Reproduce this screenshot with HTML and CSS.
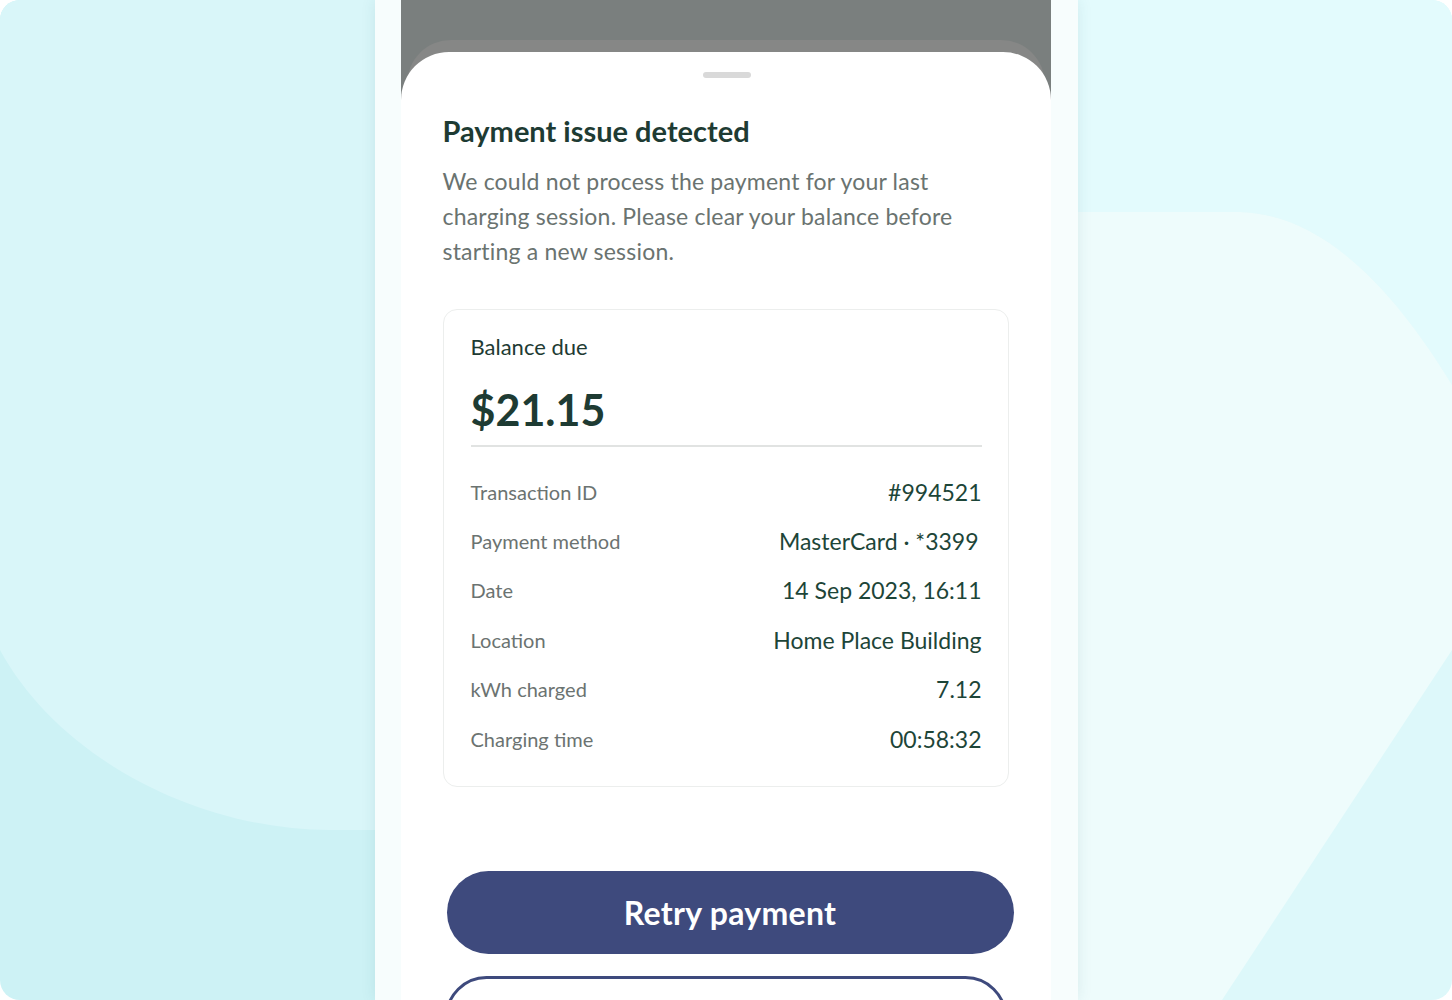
FILE: index.html
```html
<!DOCTYPE html>
<html lang="en">
<head>
<meta charset="utf-8">
<title>Payment issue detected</title>
<link rel="stylesheet" href="styles.css">
</head>
<body>
<div class="stage">
  <svg class="backdrop" viewBox="0 0 1452 1000" preserveAspectRatio="none" aria-hidden="true">
    <rect x="0" y="0" width="726" height="1000" fill="#cdf2f5"/>
    <rect x="726" y="0" width="726" height="1000" fill="#ddf8fa"/>
    <path d="M0,0 L726,0 L726,830 L330,830 C200,830 60,760 0,650 Z" fill="#d9f6f9"/>
    <path d="M726,0 L1452,0 L1452,385 C1400,300 1330,215 1240,212 L726,212 Z" fill="#e3fbfd"/>
    <path d="M726,212 L1240,212 C1330,215 1400,300 1452,385 L1452,650 L1222,1000 L726,1000 Z" fill="#eefcfc"/>
  </svg>
  <div class="phone">
    <div class="screen">
      <section class="sheet">
        <div class="handle"></div>
        <h1 class="title">Payment issue detected</h1>
        <p class="lead">We could not process the payment for your last charging session. Please clear your balance before starting a new session.</p>
        <div class="card">
          <div class="balance-label">Balance due</div>
          <div class="balance-amount">$21.15</div>
          <div class="divider"></div>
          <dl class="details">
            <div class="row"><dt>Transaction ID</dt><dd>#994521</dd></div>
            <div class="row"><dt>Payment method</dt><dd class="inset">MasterCard · *3399</dd></div>
            <div class="row"><dt>Date</dt><dd>14 Sep 2023, 16:11</dd></div>
            <div class="row"><dt>Location</dt><dd>Home Place Building</dd></div>
            <div class="row"><dt>kWh charged</dt><dd>7.12</dd></div>
            <div class="row"><dt>Charging time</dt><dd>00:58:32</dd></div>
          </dl>
        </div>
        <button class="btn btn-primary">Retry payment</button>
        <button class="btn btn-outline">Change payment method</button>
      </section>
    </div>
  </div>
</div>
</body>
</html>
```
FILE: styles.css
```css
* { box-sizing: border-box; }
html, body { margin: 0; padding: 0; background: #ffffff; }
body { width: 1452px; height: 1000px; overflow: hidden; font-family: Lato, "Noto Sans", sans-serif; }

.stage {
  position: relative;
  width: 1452px;
  height: 1000px;
  border-radius: 20px;
  overflow: hidden;
  display: flex;
  justify-content: center;
}
.backdrop {
  position: absolute;
  inset: 0;
  width: 100%;
  height: 100%;
}

.phone {
  position: relative;
  z-index: 1;
  width: 703px;
  height: 1000px;
  padding: 0 27px 0 26px;
  background: #f7fdfd;
  box-shadow: 0 0 14px rgba(40, 90, 100, 0.10);
}
.screen {
  position: relative;
  z-index: 0;
  height: 1000px;
  background: #7a7f7e;
  padding-top: 52px;
  overflow: hidden;
}
.sheet {
  position: relative;
  background: #ffffff;
  border-radius: 48px 48px 0 0;
  height: 948px;
  padding: 20px 41px 0 42px;
  display: flex;
  flex-direction: column;
}
.sheet > * { flex-shrink: 0; }
.sheet::before {
  content: "";
  position: absolute;
  z-index: -1;
  top: -12px;
  left: 6px;
  right: 6px;
  height: 80px;
  border-radius: 44px 44px 0 0;
  background: #868786;
}
.handle {
  align-self: center;
  width: 48px;
  height: 6px;
  border-radius: 3px;
  background: #d9d9d9;
  margin-left: 2px;
}
.title {
  margin: 35px 0 0 0;
  font-size: 29px;
  line-height: 36px;
  font-weight: 700;
  color: #1e3b33;
}
.lead {
  margin: 15px 0 0 0;
  font-size: 23px;
  line-height: 35px;
  letter-spacing: 0.2px;
  color: #6a7370;
  width: 545px;
}
.card {
  margin-top: 40px;
  width: 566px;
  border: 1px solid #eceeed;
  border-radius: 14px;
  padding: 22px 26px 23px 27px;
}
.balance-label {
  font-size: 22px;
  line-height: 30px;
  color: #1e3b33;
}
.balance-amount {
  margin-top: 20px;
  font-size: 43px;
  line-height: 56px;
  font-weight: 700;
  color: #1e3b33;
}
.divider {
  margin-top: 7px;
  height: 2px;
  background: #e1e3e2;
}
.details {
  margin: 20px 0 0 0;
}
.row {
  display: flex;
  justify-content: space-between;
  align-items: center;
  height: 49.4px;
}
.row dt {
  font-size: 20px;
  color: #6b7371;
}
.row dd {
  margin: 0;
  font-size: 23px;
  color: #1d4538;
}
.row dd.inset { margin-right: 3px; }

.btn {
  font-family: Lato, "Noto Sans", sans-serif;
  font-weight: 700;
  font-size: 32px;
  letter-spacing: 0.3px;
  border-radius: 42px;
  height: 83px;
  cursor: pointer;
}
.btn-primary {
  margin-top: 84px;
  margin-left: 4px;
  width: 567px;
  border: none;
  background: #3e4a7d;
  color: #ffffff;
}
.btn-outline {
  margin-top: 22px;
  margin-left: 2px;
  width: 562px;
  border: 3px solid #3e4a7d;
  background: #ffffff;
  color: #3e4a7d;
}
```
